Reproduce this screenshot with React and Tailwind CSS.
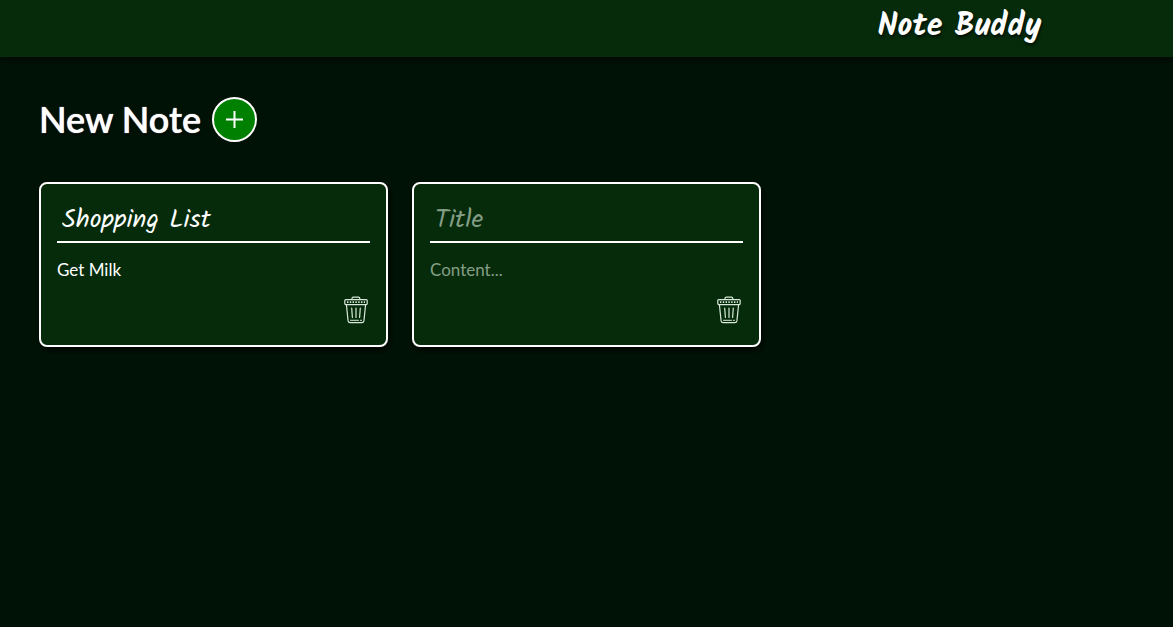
import { useState } from "react";

function TrashIcon() {
  return (
    <svg viewBox="0 0 24 28" className="h-7 w-6" fill="none" stroke="currentColor" strokeWidth="1.2" strokeLinecap="round" strokeLinejoin="round" aria-hidden="true">
      <path d="M8 3.5V2.6Q8 1.2 9.4 1.2H14.4Q15.8 1.2 15.8 2.6V3.5" />
      <rect x="0.8" y="3.6" width="22.4" height="5" rx="1" />
      <path d="M3 6.1H21" strokeDasharray="1.4 1.4" strokeWidth="1.6" strokeLinecap="butt" />
      <path d="M2.4 8.8L4.1 24.9Q4.4 26.7 6.1 26.7H17.9Q19.6 26.7 19.9 24.9L21.6 8.8" />
      <path d="M7.7 12L8.4 21.5M12 12V21.5M16.3 12L15.6 21.5" />
      <path d="M6.5 24.3H14.5M16.3 24.3H17.5" strokeWidth="1" />
    </svg>
  );
}

function NoteCard({ note, onChange, onDelete }) {
  return (
    <article className="rounded-lg border-2 border-white bg-[#052b0a] p-4 shadow-[2px_4px_6px_rgba(0,0,0,0.6)]">
      <input
        aria-label="Note title"
        placeholder="Title"
        value={note.title}
        onChange={(e) => onChange({ ...note, title: e.target.value })}
        className="block h-[43px] w-full border-b-2 border-white bg-transparent px-[5px] pb-0.5 font-['Kalam','Open_Sans',sans-serif] text-[26px] text-white outline-none placeholder:text-[#849e86]"
      />
      <textarea
        aria-label="Note content"
        placeholder="Content..."
        rows={1}
        value={note.content}
        onChange={(e) => onChange({ ...note, content: e.target.value })}
        className="mt-[15px] block h-6 w-full resize-none overflow-hidden bg-transparent text-[17px] leading-6 text-white outline-none placeholder:text-[#849e86]"
      />
      <div className="mt-3.5 flex h-[33px] items-start justify-end pr-0.5">
        <button type="button" aria-label="Delete note" onClick={onDelete} className="cursor-pointer text-[#d8e8d9]">
          <TrashIcon />
        </button>
      </div>
    </article>
  );
}

export default function App() {
  const [notes, setNotes] = useState([
    { id: 1, title: "Shopping List", content: "Get Milk" },
    { id: 2, title: "", content: "" },
  ]);

  const addNote = () => setNotes([...notes, { id: Date.now(), title: "", content: "" }]);

  return (
    <div className="min-h-screen bg-[#001206] font-['Lato',sans-serif] text-white">
      <header className="grid grid-cols-3 gap-6 bg-[#052b0a] px-[39px] pt-[7px] pb-2.5 shadow-[0_4px_6px_rgba(0,0,0,0.4)]">
        <h1 className="col-start-3 text-center font-['Kalam','Open_Sans',sans-serif] text-[32px] leading-10 font-bold [text-shadow:1px_2px_3px_rgba(0,0,0,0.7)]">
          Note Buddy
        </h1>
      </header>
      <main className="px-[39px] py-10">
        <div className="flex items-center gap-[11px]">
          <h2 className="text-4xl leading-[45px] font-semibold [text-shadow:0_0_1px_#fff,1px_2px_3px_rgba(0,0,0,0.7)]">New Note</h2>
          <button
            type="button"
            aria-label="Add note"
            onClick={addNote}
            className="flex size-[45px] cursor-pointer items-center justify-center rounded-full border-2 border-white bg-[#008000]"
          >
            <svg viewBox="0 0 17 17" className="size-[17px]" stroke="currentColor" strokeWidth="2" aria-hidden="true">
              <path d="M0 8.5H17M8.5 0V17" />
            </svg>
          </button>
        </div>
        <section className="mt-10 grid grid-cols-3 gap-6">
          {notes.map((note) => (
            <NoteCard
              key={note.id}
              note={note}
              onChange={(next) => setNotes(notes.map((n) => (n.id === next.id ? next : n)))}
              onDelete={() => setNotes(notes.filter((n) => n.id !== note.id))}
            />
          ))}
        </section>
      </main>
    </div>
  );
}
